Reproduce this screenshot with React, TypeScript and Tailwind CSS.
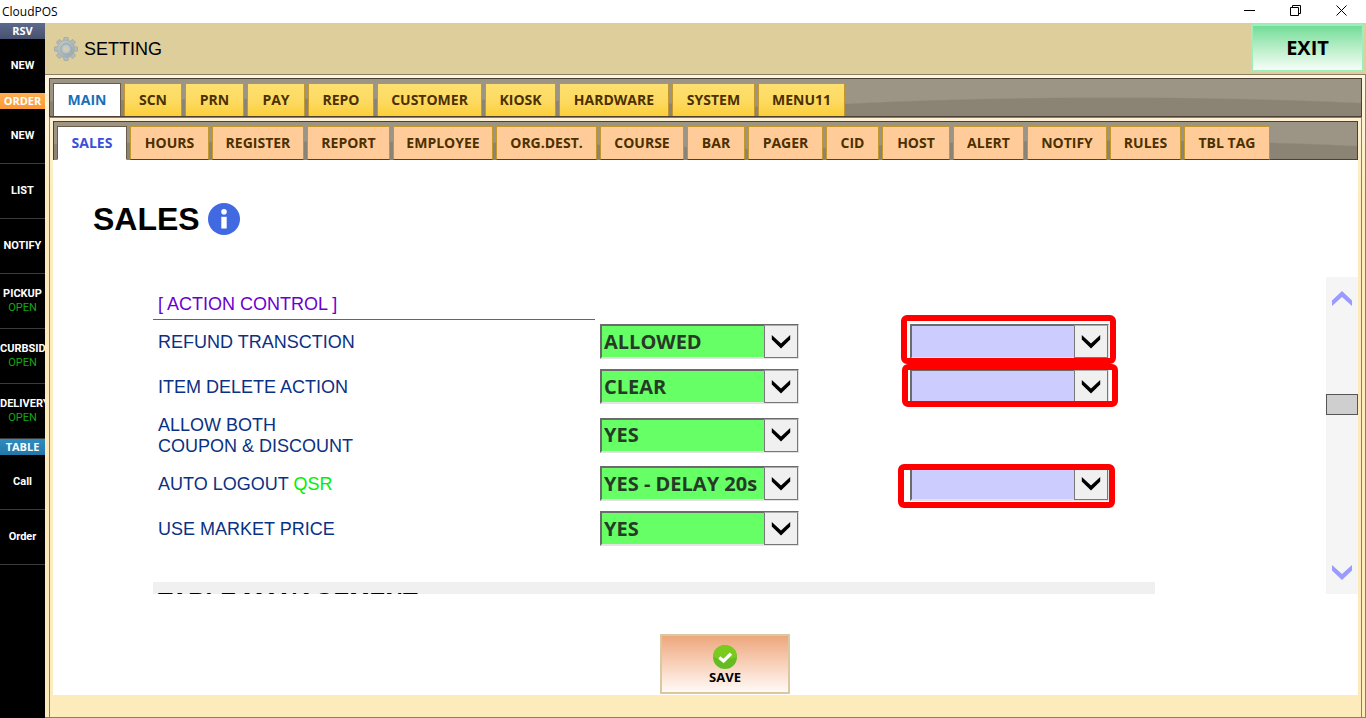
type Tab = { label: string; width: string };

const MAIN_TABS: Tab[] = [
  { label: "MAIN", width: "w-[68px]" },
  { label: "SCN", width: "w-[58px]" },
  { label: "PRN", width: "w-[59px]" },
  { label: "PAY", width: "w-[58px]" },
  { label: "REPO", width: "w-[66px]" },
  { label: "CUSTOMER", width: "w-[105px]" },
  { label: "KIOSK", width: "w-[71px]" },
  { label: "HARDWARE", width: "w-[110px]" },
  { label: "SYSTEM", width: "w-[83px]" },
  { label: "MENU11", width: "w-[87px]" },
];

const SUB_TABS: Tab[] = [
  { label: "SALES", width: "w-[70px]" },
  { label: "HOURS", width: "w-[79px]" },
  { label: "REGISTER", width: "w-[92px]" },
  { label: "REPORT", width: "w-[83px]" },
  { label: "EMPLOYEE", width: "w-[100px]" },
  { label: "ORG.DEST.", width: "w-[101px]" },
  { label: "COURSE", width: "w-[84px]" },
  { label: "BAR", width: "w-[58px]" },
  { label: "PAGER", width: "w-[75px]" },
  { label: "CID", width: "w-[53px]" },
  { label: "HOST", width: "w-[68px]" },
  { label: "ALERT", width: "w-[71px]" },
  { label: "NOTIFY", width: "w-[80px]" },
  { label: "RULES", width: "w-[71px]" },
  { label: "TBL TAG", width: "w-[86px]" },
];

const TAB_BAR =
  "flex gap-[3px] border border-[#4b4033] bg-[#9c9484] bg-[radial-gradient(ellipse_600px_60px_at_81%_78px,#8b8373_98%,transparent_100%),radial-gradient(ellipse_900px_60px_at_20%_79px,#8b8373_98%,transparent_100%)] pt-1 pl-[3px]";

function SideItem({ label, open = false, line = true }: { label: string; open?: boolean; line?: boolean }) {
  return (
    <button
      type="button"
      className={`flex w-full flex-col justify-center overflow-hidden font-[Roboto,sans-serif] text-[11px] leading-[14px] font-bold whitespace-nowrap text-white ${line ? "h-[55px] border-b border-[#3a3a3a]" : "h-[54px]"}`}
    >
      <span className="mx-auto">{label}</span>
      {open && <span className="mx-auto font-normal text-[#12a812]">OPEN</span>}
    </button>
  );
}

function SideHead({ label, tone }: { label: string; tone: string }) {
  return (
    <div className={`h-4 text-center font-['Open_Sans',sans-serif] text-[11px] leading-4 font-bold text-white ${tone}`}>
      {label}
    </div>
  );
}

function Combo({ label, value, tone }: { label: string; value: string; tone: string }) {
  return (
    <div className="relative mb-0.5 h-[35px] w-[199px]">
      <select
        aria-label={label}
        defaultValue={value}
        className={`h-full w-full appearance-none border-2 border-t-[#6b6b6b] border-r-[#e3e3e3] border-b-[#e3e3e3] border-l-[#6b6b6b] pl-0.5 font-['Open_Sans',sans-serif] text-xl leading-7 font-bold text-[#263a26] ${tone}`}
      >
        <option>{value}</option>
      </select>
      <span className="pointer-events-none absolute top-px right-px bottom-px flex w-[34px] items-center justify-center border border-[#777] border-t-[#aaa] bg-[#f0f0f0]">
        <svg width="20" height="14" viewBox="0 0 20 14" aria-hidden="true">
          <path d="M.8 0 10 8.4 19.2 0V4.6L10 13.6.8 4.6Z" fill="#000" />
        </svg>
      </span>
    </div>
  );
}

type Row = { label: React.ReactNode; name: string; value: string; extra?: string; height: string };

const ROWS: Row[] = [
  { label: "REFUND TRANSCTION", name: "Refund transction", value: "ALLOWED", extra: "-top-[9px] -left-[9px] w-[215px] h-[49px]", height: "h-[45px]" },
  { label: "ITEM DELETE ACTION", name: "Item delete action", value: "CLEAR", extra: "-top-[5px] -left-2 w-[216px] h-[43px]", height: "h-[45px]" },
  { label: <>ALLOW BOTH<br />COUPON &amp; DISCOUNT</>, name: "Allow both coupon and discount", value: "YES", height: "h-[52px]" },
  { label: <>AUTO LOGOUT <span className="text-[#00f000]">QSR</span></>, name: "Auto logout", value: "YES - DELAY 20s", extra: "-top-0.5 -left-3 w-[217px] h-11", height: "h-[45px]" },
  { label: "USE MARKET PRICE", name: "Use market price", value: "YES", height: "h-[45px]" },
];

function Gear() {
  return (
    <svg width="24" height="24" viewBox="-12 -12 24 24" aria-hidden="true">
      <defs>
        <linearGradient id="steel" x1="0" y1="0" x2="1" y2="1">
          <stop offset="0" stopColor="#c3ccca" />
          <stop offset="1" stopColor="#98a6a9" />
        </linearGradient>
      </defs>
      {[0, 45, 90, 135, 180, 225, 270, 315].map((a) => (
        <path key={a} d="M-2.8-7.5-1.9-11.6H1.9L2.8-7.5Z" transform={`rotate(${a})`} fill="#b0bbbb" stroke="#8b989b" strokeWidth=".5" />
      ))}
      <circle r="8.5" fill="url(#steel)" stroke="#a2adad" strokeWidth=".5" />
      <circle r="5.2" fill="#bac4c5" stroke="#93a2ad" strokeWidth=".9" />
      <circle r="2.4" fill="#d6cda6" stroke="#c7ced0" strokeWidth="1" />
    </svg>
  );
}

function WindowButton({ label, d }: { label: string; d: string }) {
  return (
    <button type="button" aria-label={label}>
      <svg width="11" height="11" viewBox="0 0 11 11" fill="none" stroke="#000" aria-hidden="true">
        <path d={d} />
      </svg>
    </button>
  );
}

export default function App() {
  return (
    <div className="flex h-screen flex-col overflow-hidden bg-white font-['Liberation_Sans',Arial,sans-serif] text-black">
      <div className="flex h-[23px] shrink-0 items-center justify-between pr-[19px] pl-0.5 font-['Open_Sans',sans-serif] text-xs">
        <span>CloudPOS</span>
        <div className="flex items-center gap-[35px] pb-0.5">
          <WindowButton label="Minimize" d="M0 5.5H11" />
          <WindowButton label="Restore" d="M.5 2.5H8.5V10.5H.5ZM2.5 2.5V.5H10.5V8.5H8.5" />
          <WindowButton label="Close" d="M.5.5 10.5 10.5M10.5.5.5 10.5" />
        </div>
      </div>

      <div className="flex min-h-0 flex-1">
        <nav className="w-[45px] shrink-0 overflow-hidden bg-black">
          <SideHead label="RSV" tone="bg-linear-to-b from-[#5d6a8c] to-[#48526f]" />
          <SideItem label="NEW" line={false} />
          <SideHead label="ORDER" tone="bg-linear-to-b from-[#ffae50] to-[#f99a34]" />
          <SideItem label="NEW" />
          <SideItem label="LIST" />
          <SideItem label="NOTIFY" />
          <SideItem label="PICKUP" open />
          <SideItem label="CURBSIDE" open />
          <SideItem label="DELIVERY" open />
          <SideHead label="TABLE" tone="bg-linear-to-b from-[#2f8cc0] to-[#2377a8]" />
          <SideItem label="Call" />
          <SideItem label="Order" />
        </nav>

        <main className="flex min-w-0 flex-1 flex-col">
          <header className="flex h-[51px] shrink-0 items-center bg-[#ddce9c] pr-0.5 pl-[9px]">
            <Gear />
            <h1 className="ml-1.5 flex-1 text-lg">SETTING</h1>
            <button type="button" className="mt-px h-12 w-[113px] self-start border-2 border-[#9fecbd] bg-linear-to-b from-[#70dd98] to-[#f6fdf8] font-['Open_Sans',sans-serif] text-xl font-bold">
              EXIT
            </button>
          </header>

          <div className="flex min-h-0 flex-1 flex-col border-y border-r border-[#8a7f5e] bg-linear-to-b from-[#fff5e0] to-[#fdebbb] to-20% pt-[3px] pr-[3px] pl-1">
            <nav className={`${TAB_BAR} h-[39px] shrink-0`}>
              {MAIN_TABS.map((tab, i) => (
                <button
                  key={tab.label}
                  type="button"
                  className={`border border-b-0 font-['Open_Sans',sans-serif] text-sm leading-5 font-bold ${tab.width} ${
                    i === 0
                      ? "border-[#6a5c48] bg-white text-[#1a70b8]"
                      : "border-[#c4972c] bg-linear-to-b from-[#fddf70] via-[#fddb62] to-[#fccf36] text-[#4c3000]"
                  }`}
                >
                  {tab.label}
                </button>
              ))}
            </nav>

            <div className="flex min-h-0 flex-1 flex-col border border-b-0 border-[#8a7f5e] px-[3px] pt-[3px]">
              <nav className={`${TAB_BAR} h-[39px] shrink-0 border-b-0`}>
                {SUB_TABS.map((tab, i) => (
                  <button
                    key={tab.label}
                    type="button"
                    className={`border font-['Open_Sans',sans-serif] text-sm leading-5 font-bold ${tab.width} ${
                      i === 0
                        ? "border-[#6a5c48] border-b-white bg-white text-[#3a50d8]"
                        : "border-[#c4972c] border-b-[#4b4033] bg-[#ffcc99] text-[#4c3000]"
                    }`}
                  >
                    {tab.label}
                  </button>
                ))}
                <span className="-ml-[3px] flex-1 border-b border-[#4b4033]" />
              </nav>

              <section className="mb-[22px] flex min-h-0 flex-1 flex-col bg-white">
                <div className="flex h-[117px] shrink-0 items-center gap-2 pl-10 text-[32px] font-bold">
                  <h2>SALES</h2>
                  <svg width="32" height="32" viewBox="0 0 32 32" aria-hidden="true">
                    <circle cx="16" cy="16" r="16" fill="#4169e1" />
                    <circle cx="16" cy="8.8" r="2.8" fill="#fff" />
                    <path d="M13.3 13.8H18.7V25.5H13.3Z" fill="#fff" />
                  </svg>
                </div>

                <div className="flex min-h-0 flex-1">
                  <div className="min-w-0 flex-1 overflow-hidden pl-[100px]">
                    <h3 className="mt-2.5 flex h-[33px] w-[442px] items-center border-b border-[#6a5a90] pt-0.5 pl-[5px] text-lg text-[#6a00d0]">
                      [ ACTION CONTROL ]
                    </h3>
                    {ROWS.map((row) => (
                      <div key={row.name} className={`flex items-center ${row.height}`}>
                        <div className="w-[447px] shrink-0 pl-[5px] text-lg leading-[21px] text-[#0a3182]">{row.label}</div>
                        <Combo label={row.name} value={row.value} tone="bg-[#66ff66]" />
                        {row.extra && (
                          <div className="relative ml-[111px]">
                            <Combo label={`${row.name} option`} value="" tone="bg-[#ccccff]" />
                            <span className={`pointer-events-none absolute rounded-md border-6 border-[#ff0000] ${row.extra}`} />
                          </div>
                        )}
                      </div>
                    ))}
                    <h3 className="mt-[30px] w-[1002px] bg-[#f0f0f0] pt-1 pl-[5px] text-2xl font-bold">TABLE MANAGEMENT</h3>
                  </div>
                  <div className="flex w-8 shrink-0 flex-col items-center bg-[#f5f5f5]">
                    <button type="button" aria-label="Scroll up" className="pt-3.5">
                      <svg width="20" height="15" viewBox="0 0 20 15" aria-hidden="true">
                        <path d="M0 9.5 10 0 20 9.5V15L10 6 0 15Z" fill="#9a9aff" />
                      </svg>
                    </button>
                    <div className="flex w-full flex-1 flex-col">
                      <div className="basis-[34%]" />
                      <div className="h-[21px] border border-[#555] bg-[#cfcfcf]" />
                    </div>
                    <button type="button" aria-label="Scroll down" className="pb-3.5">
                      <svg width="20" height="15" viewBox="0 0 20 15" aria-hidden="true">
                        <path d="M0 5.5 10 15 20 5.5V0L10 9 0 0Z" fill="#9a9aff" />
                      </svg>
                    </button>
                  </div>
                </div>

                <div className="flex h-[101px] shrink-0 items-end justify-center pb-px pl-[39px]">
                  <button
                    type="button"
                    className="flex h-[60px] w-[130px] flex-col items-center justify-center border-2 border-[#d9c8a0] bg-linear-to-b from-[#eda77c] to-[#fffaf7] pt-0.5 font-['Open_Sans',sans-serif] text-[13px] leading-4 font-bold"
                  >
                    <svg width="24" height="24" viewBox="0 0 24 24" aria-hidden="true">
                      <circle cx="12" cy="12" r="12" fill="#64bc22" />
                      <path d="M0 12A12 12 0 0 1 24 12Q12 16 0 12Z" fill="#7acb20" />
                      <path d="M6.3 12.4 10.6 16 18 8.7" fill="none" stroke="#fff" strokeWidth="3.2" />
                    </svg>
                    SAVE
                  </button>
                </div>
              </section>
            </div>
          </div>
        </main>
      </div>
    </div>
  );
}
